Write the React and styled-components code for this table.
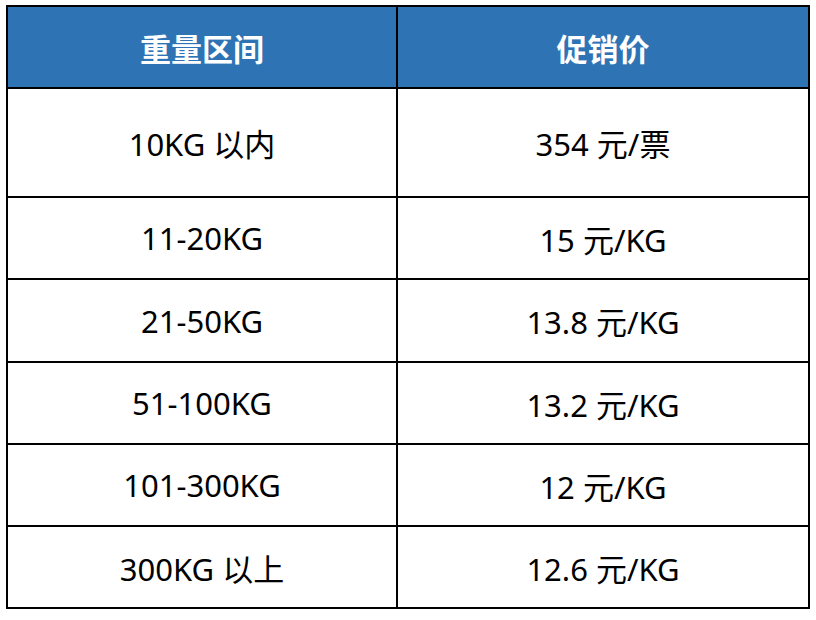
import React from "react";
import styled, { createGlobalStyle } from "styled-components";

const GlobalStyle = createGlobalStyle`
  body {
    margin: 0;
    background: #ffffff;
    font-family: "Noto Sans", "Noto Sans CJK SC", sans-serif;
  }
`;

const Page = styled.div`
  padding: 5px 0 0 6px;
`;

const Table = styled.div`
  width: 804px;
  box-sizing: border-box;
  border: 2px solid #000;
  display: grid;
  grid-template-columns: 390px 410px;
`;

const Cell = styled.div`
  box-sizing: border-box;
  height: ${(props) => props.h}px;
  display: flex;
  align-items: center;
  justify-content: center;
  border-right: ${(props) => (props.left ? "2px solid #000" : "none")};
  border-bottom: ${(props) => (props.last ? "none" : "2px solid #000")};
  font-size: 31px;
  color: #000;
`;

const HeadCell = styled(Cell)`
  background: #2e74b5;
  color: #fff;
  font-weight: 700;
  font-size: 31px;
`;

const rows = [
  { range: "10KG 以内", price: "354 元/票", h: 109 },
  { range: "11-20KG", price: "15 元/KG", h: 82 },
  { range: "21-50KG", price: "13.8 元/KG", h: 83 },
  { range: "51-100KG", price: "13.2 元/KG", h: 82 },
  { range: "101-300KG", price: "12 元/KG", h: 82 },
  { range: "300KG 以上", price: "12.6 元/KG", h: 80 },
];

const App = () => {
  return (
    <Page>
      <GlobalStyle />
      <Table>
        <HeadCell left h={82}>重量区间</HeadCell>
        <HeadCell h={82}>促销价</HeadCell>
        {rows.map((row, i) => (
          <React.Fragment key={row.range}>
            <Cell left h={row.h} last={i === rows.length - 1}>
              {row.range}
            </Cell>
            <Cell h={row.h} last={i === rows.length - 1}>
              {row.price}
            </Cell>
          </React.Fragment>
        ))}
      </Table>
    </Page>
  );
};

export default App;
